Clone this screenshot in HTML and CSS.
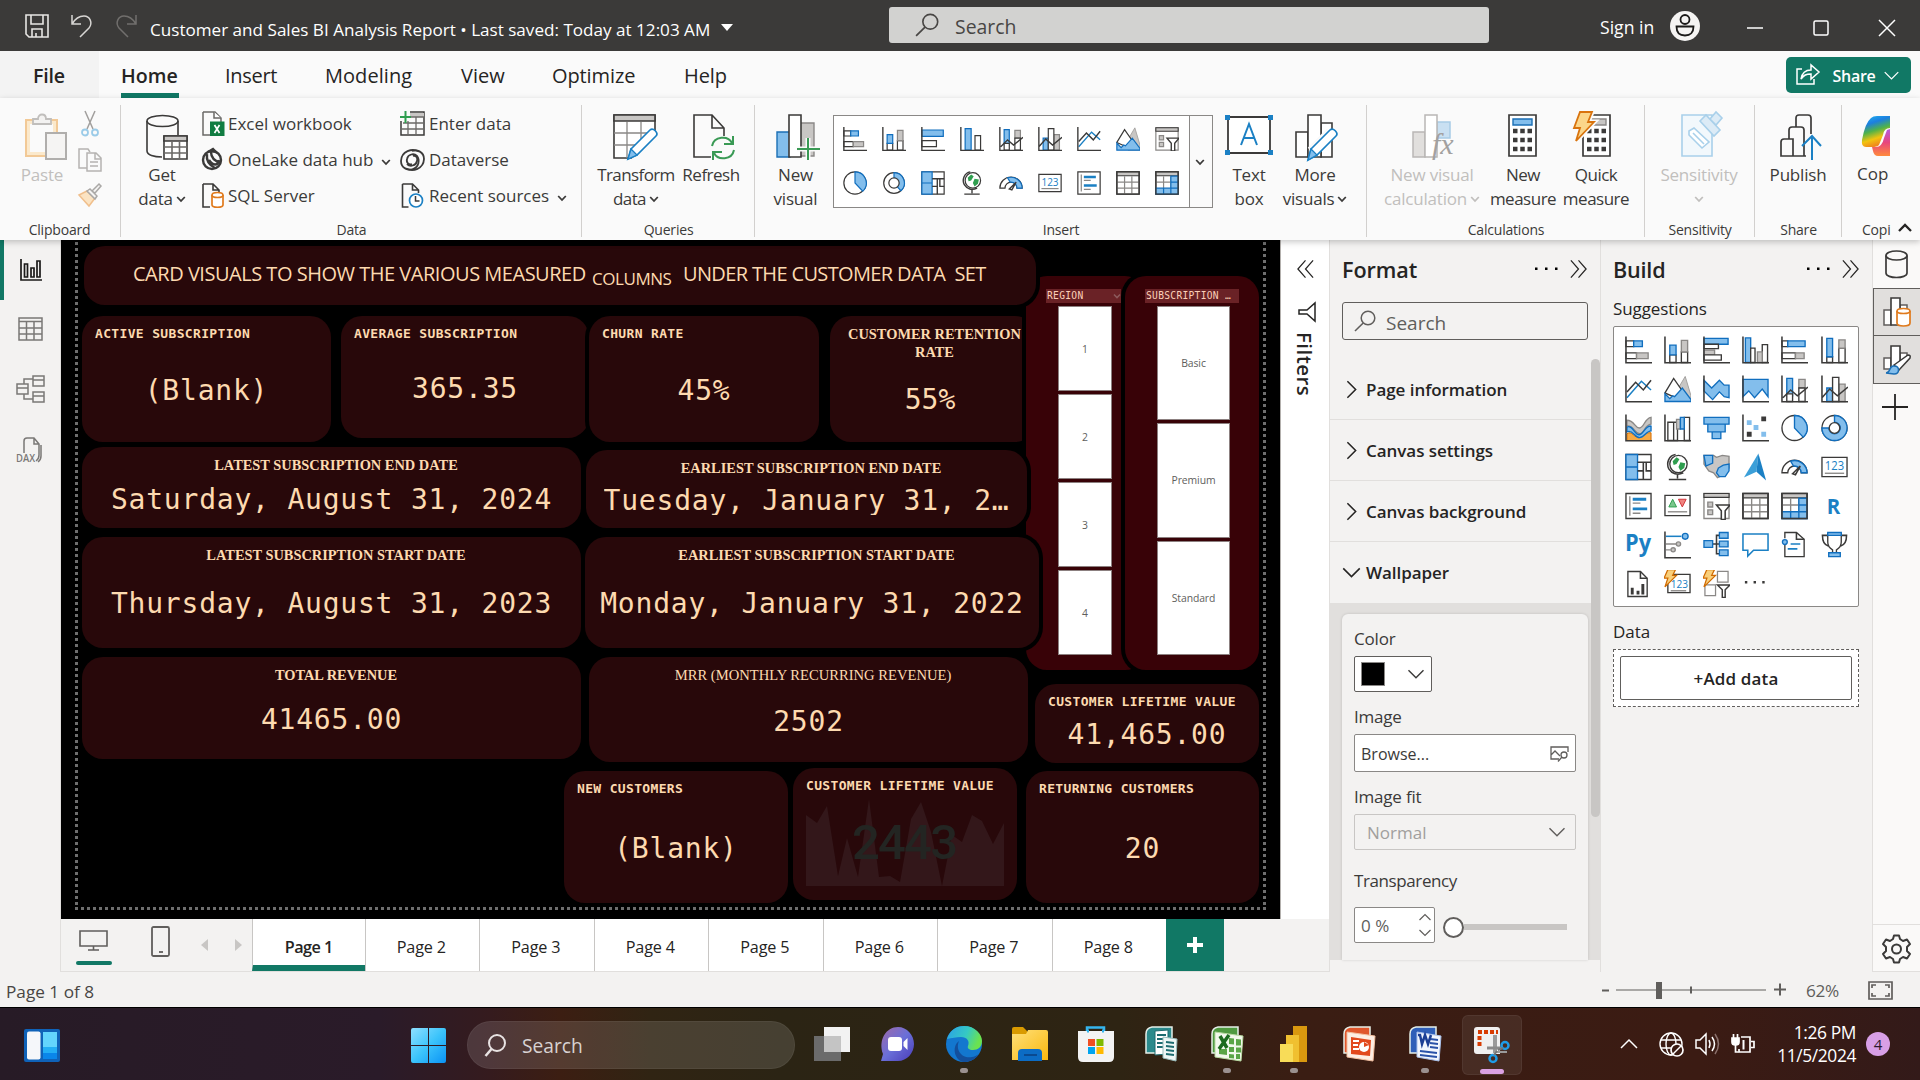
FILE: index.html
```html
<!DOCTYPE html>
<html lang="en">
<head>
<meta charset="utf-8">
<title>Customer and Sales BI Analysis Report</title>
<link rel="stylesheet" href="styles.css">
</head>
<body>
<svg class="paints" aria-hidden="true">
  <defs>
    <linearGradient id="g-cop" x1="0" y1="0" x2="0.3" y2="1"><stop offset="0" stop-color="#1fb8f0"/><stop offset=".3" stop-color="#1c7fe0"/><stop offset=".55" stop-color="#4fb24a"/><stop offset=".8" stop-color="#f2c40f"/><stop offset="1" stop-color="#f08a1c"/></linearGradient>
    <linearGradient id="g-cop2" x1="0" y1="0" x2="0" y2="1"><stop offset="0" stop-color="#b35ae0"/><stop offset=".5" stop-color="#e8467c"/><stop offset="1" stop-color="#ff8a3c"/></linearGradient>
    <linearGradient id="g-win" x1="0" y1="0" x2="1" y2="1"><stop offset="0" stop-color="#8fe0ff"/><stop offset=".5" stop-color="#3cc4fb"/><stop offset="1" stop-color="#0a93f5"/></linearGradient>
    <linearGradient id="g-chat" x1="0" y1="0" x2="1" y2="1"><stop offset="0" stop-color="#a06aa8"/><stop offset=".5" stop-color="#6a6fd8"/><stop offset="1" stop-color="#4a3cb8"/></linearGradient>
    <linearGradient id="g-edge" x1="0" y1="0" x2="1" y2=".3"><stop offset="0" stop-color="#2a9fe8"/><stop offset=".6" stop-color="#35c9c4"/><stop offset="1" stop-color="#6be24f"/></linearGradient>
    <linearGradient id="g-fold" x1="0" y1="0" x2="1" y2="1"><stop offset="0" stop-color="#ffe07a"/><stop offset="1" stop-color="#f9b80e"/></linearGradient>
  </defs>
</svg>
<svg class="sprite" aria-hidden="true">
  <symbol id="chev" viewBox="0 0 10 10"><path d="M1.2 3l3.8 4 3.8-4" fill="none" stroke="currentColor" stroke-width="1.8"/></symbol>
  <symbol id="chev-thin" viewBox="0 0 20 12"><path d="M1 1.5l9 9 9-9" fill="none" stroke="currentColor" stroke-width="1.7"/></symbol>
  <symbol id="dbl" viewBox="0 0 20 20"><path d="M2 1l8 9-8 9M10 1l8 9-8 9" fill="none" stroke="currentColor" stroke-width="1.3"/></symbol>
  <symbol id="lens" viewBox="0 0 22 22"><circle cx="14" cy="8" r="6.8" fill="none" stroke="currentColor" stroke-width="1.5"/><path d="M9.2 13L1 21" stroke="currentColor" stroke-width="1.6"/></symbol>
  <symbol id="v-sbar" viewBox="0 0 28 28"><path d="M1 4.5h8v6H1z" class="kw"/><path d="M9 4.500h9v6H9z" class="b"/><path d="M1 17h11v6H1z" class="kw"/><path d="M12 17h12v6H12z" class="g"/><path d="M1 0v27.200h27" class="k"/></symbol>
  <symbol id="v-scol" viewBox="0 0 28 28"><path d="M6 19h6.500v8H6zM18 16h6.500v11H18z" class="kw"/><path d="M6 9h6.500v10H6z" class="b"/><path d="M18 4h6.500v12H18z" class="g"/><path d="M1 0v27.200h27" class="k"/></symbol>
  <symbol id="v-cbar" viewBox="0 0 28 28"><path d="M1 2h25v6H1z" class="b"/><path d="M1 8h15v4.500H1z" class="kw"/><path d="M1 14h11v5H1z" class="g"/><path d="M1 19h18v5.500H1z" class="kw"/><path d="M1 0v27.200h27" class="k"/></symbol>
  <symbol id="v-bar2" viewBox="0 0 28 28"><path d="M1 3.500h25v7.500H1z" class="b"/><path d="M1 16h17v7H1z" class="kw"/><path d="M1 0v27.200h27" class="k"/></symbol>
  <symbol id="v-ccol" viewBox="0 0 28 28"><path d="M3.500 1.500h5.500V27H3.500z" class="b"/><path d="M9 12h4.500v15H9zM21 8.500h5.500V27H21z" class="kw"/><path d="M16 16h5v11h-5z" class="g"/><path d="M1 0v27.200h27" class="k"/></symbol>
  <symbol id="v-col2" viewBox="0 0 28 28"><path d="M6 2h7v25H6z" class="b"/><path d="M17.500 10h6.500v17h-6.500z" class="kw"/><path d="M1 0v27.200h27" class="k"/></symbol>
  <symbol id="v-pbar" viewBox="0 0 28 28"><path d="M1 4.500h6v6H1zM1 17h14v6H1z" class="kw"/><path d="M7 4.500h18v6H7z" class="b"/><path d="M15 17h9v6h-9z" class="g"/><path d="M1 0v27.200h27" class="k"/></symbol>
  <symbol id="v-pcol" viewBox="0 0 28 28"><path d="M6 21h6v6H6zM18.500 12H25v15h-6.500z" class="kw"/><path d="M6 2h6v19H6z" class="b"/><path d="M18.500 3.500H25V12h-6.500z" class="g"/><path d="M1 0v27.200h27" class="k"/></symbol>
  <symbol id="v-line" viewBox="0 0 28 28"><path d="M2 23L17 6l10 9" class="bl"/><path d="M2 17l9-10 8 8 8-10" class="k"/><path d="M1 0v27.200h27" class="k"/></symbol>
  <symbol id="v-area" viewBox="0 0 28 28"><path d="M12 18L22 1l6 20v6H14z" class="gf"/><path d="M1 18L10 3l9 13-5 8z" class="kw"/><path d="M1 19l5 5 3-3 2 1 8-9 9 12v2H1z" class="b"/></symbol>
  <symbol id="v-sarea" viewBox="0 0 28 28"><path d="M1 5l8 8 8-8 5 5h5v13l-5-1-5-5-7 8-9-9z" class="b"/><path d="M1 0v27.200h27" class="k"/></symbol>
  <symbol id="v-parea" viewBox="0 0 28 28"><path d="M1 4h26v18l-6-8-8 9-6-7-6 6z" class="b"/><path d="M1 0v27.200h27" class="k"/></symbol>
  <symbol id="v-lscol" viewBox="0 0 28 28"><path d="M6 3h6v18H6z" class="b"/><path d="M18.500 4H25v9h-6.500z" class="g"/><path d="M6 19h6v8H6zM18.500 13H25v14h-6.500z" class="kw"/><path d="M2 23l8-8 7 6 11-9M1 0v27.200h27" class="k"/></symbol>
  <symbol id="v-lccol" viewBox="0 0 28 28"><path d="M6 13h6v14H6z" class="b"/><path d="M18.500 9H25v18h-6.500z" class="g"/><path d="M12 2h6.500v25H12z" class="kw"/><path d="M1 23l8-9 8 7 11-9M1 0v27.200h27" class="k"/></symbol>
  <symbol id="v-rib" viewBox="0 0 28 28"><path d="M2 20c5-4 8 5 13 4s6-6 12-5v8H2z" fill="#f7a944" stroke="#d06a00"/><path d="M2 6c8 0 8 8 13 8s5-10 12-11v7c-7 1-7 10-12 10S9 11 2 12z" class="g"/><path d="M2 13c6-3 8 9 13 8s6-10 12-9v5c-5 0-7 7-12 7S8 15 2 18z" class="b"/><path d="M1 0v27.200h27" class="k"/></symbol>
  <symbol id="v-wat" viewBox="0 0 28 28"><path d="M4 8h6v19H4zM21 3h5.500v24H21zM10 8h4v19h-4z" class="kw"/><path d="M13 5h4v10h-4z" class="g"/><path d="M17 3h4v12h-4z" class="b"/><path d="M1 0v27.200h27" class="k"/></symbol>
  <symbol id="v-fun" viewBox="0 0 28 28"><path d="M1 3h26v7H1zM5 10h18v8H5zM9.500 18h9v7h-9z" class="b"/></symbol>
  <symbol id="v-scat" viewBox="0 0 28 28"><path d="M5 6h5v5H5zM12 11h5v5h-5zM20 18h5v5h-5z" fill="#83beec"/><path d="M20 2h5v5h-5zM5 18h5v5H5z" fill="#3b3a39"/><path d="M1 0v27.200h27" class="k"/></symbol>
  <symbol id="v-pie" viewBox="0 0 28 28"><circle cx="14" cy="14" r="13" class="kw"/><path d="M14 1a13 13 0 0 1 9 22.500L14 14z" class="b"/></symbol>
  <symbol id="v-don" viewBox="0 0 28 28"><circle cx="14" cy="14" r="13" class="kw"/><path d="M14 1a13 13 0 1 1-13 13h7a6 6 0 1 0 6-6z" class="b"/><circle cx="14" cy="14" r="5.500" class="kw"/></symbol>
  <symbol id="v-don2" viewBox="0 0 28 28"><circle cx="14" cy="14" r="12" class="kw"/><path d="M14 2a12 12 0 0 1 8 21l-4-4.500A6.500 6.500 0 0 0 14 8z" class="b"/><circle cx="14" cy="14" r="6" class="kw"/></symbol>
  <symbol id="v-tree" viewBox="0 0 28 28"><path d="M1 1h26v26H1z" class="kw"/><path d="M1 1h12v13H1zM1 14h12v13H1z" class="b"/><path d="M13 9h14M19 9v18M13 18h6M22 9v9h5" class="k"/></symbol>
  <symbol id="v-map" viewBox="0 0 28 28"><circle cx="15" cy="11" r="9" class="kw"/><path d="M9 8l4-4 3 2-3 5-3 1zM17 9l5 1-1 5-4 3-2-4z" fill="#2f9e4f"/><path d="M12 1C5 2 2 10 5 16c3 5 9 7 15 4M14 22v4M5 27h18" class="k"/></symbol>
  <symbol id="v-fmap" viewBox="0 0 28 28"><path d="M1 2h10l3 2 6-2 7 1v12l-5 2-1 5-6 3-4-5-5-2-5-7z" class="g"/><path d="M1 2h9v8l-7 3zM16 15l5-3 6-1v7l-4 6h-6l-3-4z" class="b"/></symbol>
  <symbol id="v-az" viewBox="0 0 28 28"><path d="M17 0L2 25l13-6z" fill="#3b9fd8"/><path d="M17 0l8 28-10-9z" fill="#1b80c4"/></symbol>
  <symbol id="v-gau" viewBox="0 0 28 28"><path d="M1 20A13 13 0 0 1 27 20h-6a7 7 0 0 0-14 0z" class="kw"/><path d="M10 8A13 13 0 0 1 27 20h-6a7 7 0 0 0-8-7z" class="b"/><path d="M12 21l8-8-5 9z" class="k"/></symbol>
  <symbol id="v-card" viewBox="0 0 28 28"><path d="M1 4h26v20H1z" class="kw"/><text x="14" y="17" font-size="12.500" textLength="20" lengthAdjust="spacingAndGlyphs" text-anchor="middle" fill="#1b80c4">123</text><path d="M4 20.500h20" class="gl"/></symbol>
  <symbol id="v-mcard" viewBox="0 0 28 28"><path d="M1 1h26v26H1z" class="kw"/><path d="M5 4v20" class="gl"/><path d="M8 7h14M8 17h15" stroke="#1b80c4" stroke-width="3"/><path d="M8 11h8M8 21.500h8" class="gl"/></symbol>
  <symbol id="v-kpi" viewBox="0 0 28 28"><path d="M1 3h26v21H1z" class="kw"/><path d="M5 15l4-8 4 8z" fill="#7cc68d" stroke="#2f9e4f"/><path d="M15 7h8l-4 8z" fill="#f0837f" stroke="#d13438"/><path d="M4 20h20" class="gl"/></symbol>
  <symbol id="v-slic" viewBox="0 0 28 28"><path d="M1 1h26v26H1z" fill="#fff" stroke="#8a8886" stroke-width="1.400"/><path d="M1 1h26v4H1z" class="gk"/><path d="M5 10h5v5H5zM5 18h5v5H5z" class="g"/><path d="M14 13h14l-5 6v9h-4v-9z" fill="#fff" stroke="#3b3a39" stroke-width="1.600"/></symbol>
  <symbol id="v-tab" viewBox="0 0 28 28"><path d="M1 1h26v26H1z" class="kw"/><path d="M1 1h26v4.500H1z" class="gk"/><path d="M1 13h26M1 20h26M10 6v21M18.500 6v21" class="gl"/><path d="M1 1h26v26H1z" class="k"/></symbol>
  <symbol id="v-mat" viewBox="0 0 28 28"><path d="M1 1h26v26H1z" class="kw"/><path d="M1 1h26v4.500H1z" class="gk"/><path d="M1 13h17M10 6v14M18.500 6v14" class="gl"/><path d="M18.500 6H27v7h-8.500zM18.500 13H27v7h-8.500zM18.500 20H27v7h-8.500zM10 20h8.500v7H10zM1 20h9v7H1z" class="b"/><path d="M1 1h26v26H1z" class="k"/></symbol>
  <symbol id="v-r" viewBox="0 0 28 28"><text x="6" y="22" font-size="23" font-weight="700" fill="#1b80c4" textLength="14" lengthAdjust="spacingAndGlyphs">R</text></symbol>
  <symbol id="v-py" viewBox="0 0 28 28"><text x="0" y="20" font-size="24" font-weight="700" fill="#1b80c4" textLength="27" lengthAdjust="spacingAndGlyphs">Py</text></symbol>
  <symbol id="v-inf" viewBox="0 0 28 28"><path d="M2 5h16" class="bl"/><circle cx="22" cy="5" r="3" class="b"/><path d="M2 13h11M2 19h5" class="gl"/><circle cx="15" cy="13" r="2.200" class="g"/><circle cx="9.500" cy="19" r="2.200" class="g"/><path d="M1 0v27.200h27" class="k"/></symbol>
  <symbol id="v-dec" viewBox="0 0 28 28"><path d="M10 13h8M18 4h-4v19h4" class="k"/><path d="M1 9.500h9v7H1zM17 1h9v6h-9zM17 10h9v6h-9zM17 19h9v6h-9z" class="b"/></symbol>
  <symbol id="v-qa" viewBox="0 0 28 28"><path d="M1 2.500h26v17H12l-6 6v-6H1z" fill="#fff" stroke="#1b80c4" stroke-width="1.600"/></symbol>
  <symbol id="v-nar" viewBox="0 0 28 28"><path d="M4 7V1h12l8 7v18H4V14" class="kw"/><path d="M16 1v7h8" class="k"/><circle cx="4" cy="11" r="2.500" class="b"/><path d="M10 13h10M7 18h10" class="bl"/></symbol>
  <symbol id="v-tro" viewBox="0 0 28 28"><path d="M7 4H1.500c0 6 2 10 6 11M21 4h5.500c0 6-2 10-6 11" class="k"/><path d="M7 2h14v9c0 5-3 7-5 8v4h-4v-4c-2-1-5-3-5-8z" class="kw"/><path d="M7 1h14v3H7zM8 22h12v4H8z" class="b"/></symbol>
  <symbol id="v-pag" viewBox="0 0 28 28"><path d="M3 1h13l7 7v19H3z" class="kw"/><path d="M16 1v7h7" class="k"/><path d="M6 18h3v7H6zM12 21h3v4h-3zM17 14h3v11h-3z" fill="#3b3a39"/></symbol>
  <symbol id="v-bcard" viewBox="0 0 28 28"><path d="M4 4h23v19H4z" class="kw"/><text x="7" y="18" font-size="12" textLength="18" lengthAdjust="spacingAndGlyphs" fill="#1b80c4">123</text><path d="M7 21h16" class="gl"/><path d="M4-1h8L9 5h4L1 17l3-9H0z" fill="#f9cf7a" stroke="#d06a00" stroke-width="1.300"/></symbol>
  <symbol id="v-bslic" viewBox="0 0 28 28"><path d="M15 1h11v11H15zM2 15h11v11H2z" fill="#fff" stroke="#8a8886" stroke-width="1.300"/><path d="M4-1h8L9 5h4L1 17l3-9H0z" fill="#f9cf7a" stroke="#d06a00" stroke-width="1.300"/><path d="M15 15h13l-5 5v8h-3v-8z" fill="#fff" stroke="#3b3a39" stroke-width="1.500"/></symbol>
  <symbol id="v-dots" viewBox="0 0 28 28"><path d="M3 11h2.500v2.500H3zM12 11h2.500v2.500H12zM21 11h2.500v2.500H21z" fill="#3b3a39"/></symbol>
  <symbol id="t-back" viewBox="0 0 34 36"><path d="M8 1h20v26H2V8q0-6 6-7z" fill="currentColor" stroke="#e6efe9" stroke-width="1.500"/></symbol>
</svg>

<header class="titlebar">
  <div class="quick">
    <svg width="24" height="24" viewBox="0 0 24 24" fill="none" stroke="#e8e6e4" stroke-width="1.600"><path d="M1 1h22v22H4l-3-3zM6 1v9h12V1M7 23v-8h10v8M11 23v-4"/></svg>
    <svg width="22" height="24" viewBox="0 0 22 24" fill="none" stroke="#d8d6d4" stroke-width="1.500"><path d="M1 1v9h9M1 10C4 5 8 2 13 2c6 0 9 7 5 12l-9 9"/></svg>
    <svg width="22" height="24" viewBox="0 0 22 24" fill="none" stroke="#716f6d" stroke-width="1.500"><path d="M21 1v9h-9M21 10C18 5 14 2 9 2 3 2 0 9 4 14l9 9"/></svg>
  </div>
  <div class="doc">Customer and Sales BI Analysis Report • Last saved: Today at 12:03 AM</div>
  <span class="tri"></span>
  <div class="topsearch"><svg width="24" height="24"><use href="#lens"/></svg><span>Search</span></div>
  <span class="signin">Sign in</span>
  <svg class="avatar" width="30" height="30" viewBox="0 0 30 30"><circle cx="15" cy="15" r="15" fill="#f5f4f3"/><g fill="none" stroke="#1b1a19" stroke-width="1.800"><circle cx="15" cy="8.500" r="4.500"/><path d="M6.500 15.500h17c0 6-3 9-8.500 9s-8.500-3-8.500-9z"/></g></svg>
  <div class="winbtns">
    <svg width="16" height="16"><path d="M0 8h16" stroke="#fff" stroke-width="1.500"/></svg>
    <svg width="16" height="16"><rect x="1" y="1" width="14" height="14" rx="1.500" fill="none" stroke="#fff" stroke-width="1.500"/></svg>
    <svg width="16" height="16"><path d="M0 0l16 16M16 0L0 16" stroke="#fff" stroke-width="1.500"/></svg>
  </div>
</header>

<nav class="tabs">
  <span class="file">File</span><span class="home">Home</span><span class="t-ins">Insert</span><span class="t-mod">Modeling</span><span class="t-view">View</span><span class="t-opt">Optimize</span><span class="t-help">Help</span>
  <button class="share"><svg width="24" height="24" viewBox="0 0 24 24" fill="none" stroke="#fff" stroke-width="1.500"><path d="M6 7H1v15h17v-5M5 17c1-6 4-9 10-9V3l8 7-8 7v-5c-5 0-7 1-10 5z"/></svg><span>Share</span><svg width="15" height="9"><use href="#chev-thin"/></svg></button>
</nav>

<section class="ribbon">
  <div class="group g-clip">
    <div class="cmds">
      <div class="big paste dim"><svg width="42" height="46" viewBox="0 0 42 46"><path d="M1 6h31v36H1z" fill="#fbe9cc" stroke="#f2c996" stroke-width="2"/><path d="M5 10h23v28H5z" fill="#fafafa"/><path d="M8 10V5h5c0-6 8-6 8 0h5v5z" fill="#f3f2f1" stroke="#c0bebc" stroke-width="1.800"/><path d="M21 19h20v26H21z" fill="#f5f4f3" stroke="#b0aeac" stroke-width="2"/></svg><span>Paste</span></div>
      <div class="minis">
        <svg width="18" height="26" viewBox="0 0 18 26" fill="none"><path d="M4 0l8 18M14 0L6 18" stroke="#a19f9d" stroke-width="1.500"/><circle cx="4" cy="21.500" r="3" stroke="#9bcbe8" stroke-width="1.800"/><circle cx="14" cy="21.500" r="3" stroke="#9bcbe8" stroke-width="1.800"/></svg>
        <svg width="24" height="24" viewBox="0 0 24 24" fill="#fafafa" stroke="#b5b3b1" stroke-width="1.500"><path d="M9 20H1V1h9l2 3"/><path d="M9 5h9l5 5v13H9zM17 5v6h6M12 14h8M12 18h8"/></svg>
        <svg width="24" height="24" viewBox="0 0 24 24"><path d="M1 12l8-4 8 7-6 8z" fill="#fbe3c2" stroke="#f0bf8c" stroke-width="1.500"/><path d="M9 8l3-2 7 7-2 3zM14 8l7-7 2 2-6 7z" fill="#f5f4f3" stroke="#aaa8a6" stroke-width="1.500"/></svg>
      </div>
    </div>
    <div class="glabel">Clipboard</div>
  </div>
  <div class="group g-data">
    <div class="cmds">
      <div class="big getdata"><svg width="42" height="46" viewBox="0 0 42 46" fill="none" stroke="#3b3a39" stroke-width="1.600"><path d="M1 7v30c0 4 7 6 15 6M32 7v14"/><ellipse cx="16.500" cy="7" rx="15.500" ry="5.500"/><path d="M18 22h23v23H18z" fill="#fff"/><path d="M18 22h23v5H18z" fill="#c8c6c4"/><path d="M18 33h23M18 39h23M26 27v18M33.500 27v18" stroke="#6b6967"/></svg><span>Get</span><span>data<svg width="10" height="10"><use href="#chev"/></svg></span></div>
      <div class="list l1">
        <div><svg width="23" height="25" viewBox="0 0 23 25"><path d="M1 1h12l6 6v5M1 1v23h8" fill="none" stroke="#6b6967" stroke-width="1.500"/><path d="M12 1v6h7" fill="#fff" stroke="#6b6967" stroke-width="1.500"/><path d="M8 10.500h14.500V25H8z" fill="#107c41"/><path d="M12.500 14l5 8M17.500 14l-5 8" stroke="#fff" stroke-width="1.700"/></svg>Excel workbook</div>
        <div><svg width="23" height="23" viewBox="0 0 23 23" fill="none" stroke="#3b3a39" stroke-width="2.400"><circle cx="10" cy="12" r="9"/><path d="M5 6c-1 7 2 11 8 14M9 4c0 6 3 9 10 11M7 12c4 6 9 6 10 0"/><path d="M6 4l5-3 4 4" fill="#3b3a39"/></svg>OneLake data hub<svg class="cv" width="10" height="10"><use href="#chev"/></svg></div>
        <div><svg width="23" height="25" viewBox="0 0 23 25"><path d="M1 1h10l6 6v3M1 1v23h7M11 1v6h6" fill="none" stroke="#3b3a39" stroke-width="1.600"/><path d="M10 12v10c0 3 11 3 11 0V12" fill="#fff" stroke="#e07a1c" stroke-width="1.700"/><ellipse cx="15.500" cy="12" rx="5.500" ry="2.500" fill="#fff" stroke="#e07a1c" stroke-width="1.700"/></svg>SQL Server</div>
      </div>
      <div class="list l2">
        <div><svg width="25" height="25" viewBox="0 0 25 25"><path d="M1 10v14h23V1H10" fill="none" stroke="#3b3a39" stroke-width="1.500"/><path d="M10 2h14v4H10z" fill="#c8c6c4"/><path d="M10 6h14M3 12h21M1 18h23M8 10v14M16 6v18" stroke="#6b6967" stroke-width="1.300" fill="none"/><path d="M5.500 0v12M0 6h11" stroke="#2f9e4f" stroke-width="2"/></svg>Enter data</div>
        <div><svg width="25" height="22" viewBox="0 0 25 22" fill="none" stroke="#3b3a39" stroke-width="1.800"><path d="M19 2.500C12-1 1.500 2 1 12c0 7 7 10 12 8 6-2 7-9 4-13-3-3-9-2-10 3-1 4 2 6 5 5"/><path d="M6 19.500c7 3.500 17.500.500 18-9.500 0-7-7-10-12-8"/><path d="M13 7c3-1 5 2 4 5-1 5-7 6-10 3"/></svg>Dataverse</div>
        <div><svg class="rs" width="22" height="25" viewBox="0 0 22 25"><path d="M1 1h10l6 6v3M1 1v23h6M11 1v6h6" fill="none" stroke="#3b3a39" stroke-width="1.600"/><circle cx="14.500" cy="17.500" r="6.500" fill="#fff" stroke="#1b80c4" stroke-width="1.700"/><path d="M14 13v5h4" fill="none" stroke="#3b3a39" stroke-width="1.500"/></svg>Recent sources<svg class="cv" width="10" height="10"><use href="#chev"/></svg></div>
      </div>
    </div>
    <div class="glabel">Data</div>
  </div>
  <div class="group g-query">
    <div class="cmds">
      <div class="big b-tr"><svg width="46" height="46" viewBox="0 0 46 46"><path d="M1 1h41v43H1z" fill="#fff" stroke="#3b3a39" stroke-width="1.600"/><path d="M1 1h41v6H1z" fill="#c8c6c4" stroke="#3b3a39" stroke-width="1.600"/><path d="M1 19h41M1 31h41M14 8v36M28 8v36" stroke="#8a8886" stroke-width="1.300"/><path d="M40 20l8 6v22H16z" fill="#fafafa"/><path d="M18 35L37 16c3-3 9 3 6 6L24 41l-9 4z" fill="#fff" stroke="#1b80c4" stroke-width="1.700"/><path d="M18 35l6 6-9 4z" fill="#83beec" stroke="#1b80c4" stroke-width="1.300"/></svg><span>Transform</span><span>data<svg width="10" height="10"><use href="#chev"/></svg></span></div>
      <div class="big b-rf"><svg width="42" height="46" viewBox="0 0 42 46" fill="none"><path d="M18 43H1V1h18l12 13v8M19 1v13h12" stroke="#3b3a39" stroke-width="1.600"/><path d="M19 32c2-10 16-11 20-3M40 22v8h-9M41 36c-2 10-16 11-20 3M20 46v-8h9" stroke="#3a9a55" stroke-width="2"/></svg><span>Refresh</span></div>
    </div>
    <div class="glabel">Queries</div>
  </div>
  <div class="group g-insert">
    <div class="cmds">
      <div class="big b-nv"><svg width="44" height="46" viewBox="0 0 44 46"><path d="M24 9h14v33H24z" fill="#c8c6c4" stroke="#8a8886" stroke-width="1.400"/><path d="M1 18h13v25H1z" fill="#83beec" stroke="#1b6fb5" stroke-width="1.400"/><path d="M13 1h12v42H13z" fill="#fff" stroke="#3b3a39" stroke-width="1.600"/><path d="M32 24v22M21 35h23" stroke="#fafafa" stroke-width="5"/><path d="M32 24v22M21 35h23" stroke="#3a9a55" stroke-width="2"/></svg><span>New</span><span>visual</span></div>
      <div class="gallery">
        <div class="cells">
          <svg><use href="#v-sbar"/></svg><svg><use href="#v-scol"/></svg><svg><use href="#v-bar2"/></svg><svg><use href="#v-col2"/></svg><svg><use href="#v-lscol"/></svg><svg><use href="#v-lccol"/></svg><svg><use href="#v-line"/></svg><svg><use href="#v-area"/></svg><svg><use href="#v-slic"/></svg>
          <svg><use href="#v-pie"/></svg><svg><use href="#v-don2"/></svg><svg><use href="#v-tree"/></svg><svg><use href="#v-map"/></svg><svg><use href="#v-gau"/></svg><svg><use href="#v-card"/></svg><svg><use href="#v-mcard"/></svg><svg><use href="#v-tab"/></svg><svg><use href="#v-mat"/></svg>
        </div>
        <div class="more"><svg width="10" height="10"><use href="#chev"/></svg></div>
      </div>
      <div class="big b-tb"><svg width="48" height="46" viewBox="0 0 48 46"><path d="M3 3h42v36H3z" fill="#fff" stroke="#3b3a39" stroke-width="1.800"/><path d="M0 1h5v5H0zM43 1h5v5h-5zM0 36h5v5H0zM43 36h5v5h-5z" fill="#1b80c4"/><path d="M16 31l8-21 8 21M19 24h10" fill="none" stroke="#1b80c4" stroke-width="2"/></svg><span>Text</span><span>box</span></div>
      <div class="big b-mv"><svg width="46" height="46" viewBox="0 0 46 46"><path d="M1 18h12v25H1zM26 9h11v34H26z" fill="#fff" stroke="#3b3a39" stroke-width="1.600"/><path d="M13 1h13v42H13z" fill="#fff" stroke="#3b3a39" stroke-width="1.600"/><path d="M36 19L17 38" stroke="#fafafa" stroke-width="12"/><path d="M16 35L35 16c3-3 9 3 6 6L22 41l-9 5z" fill="#fff" stroke="#1b80c4" stroke-width="1.700"/><path d="M16 35l6 6-9 5z" fill="#83beec" stroke="#1b80c4" stroke-width="1.300"/></svg><span>More</span><span>visuals<svg width="10" height="10"><use href="#chev"/></svg></span></div>
    </div>
    <div class="glabel">Insert</div>
  </div>
  <div class="group g-calc">
    <div class="cmds">
      <div class="big b-nvc dim"><svg width="44" height="46" viewBox="0 0 44 46"><path d="M1 18h12v25H1z" fill="#e1dfdd" stroke="#b9b7b5" stroke-width="1.500"/><path d="M25 8h13v16H25z" fill="#c9e0f2" stroke="#a8cbe6" stroke-width="1.500"/><path d="M13 1h12v42H13z" fill="#fff" stroke="#b9b7b5" stroke-width="1.500"/><text x="20" y="40" font-family="Liberation Serif" font-style="italic" font-size="30" fill="#a3a1a0">fx</text></svg><span>New visual</span><span>calculation<svg width="10" height="10"><use href="#chev"/></svg></span></div>
      <div class="big b-nm"><svg width="30" height="46" viewBox="0 0 30 46"><path d="M1 1h27v41H1z" fill="#fff" stroke="#3b3a39" stroke-width="1.700"/><path d="M5 5h19v6H5z" fill="#83beec" stroke="#1b6fb5" stroke-width="1.400"/><path d="M5 17h19M5 26h19M5 35h19" stroke="#3b3a39" stroke-width="4.500" stroke-dasharray="4.500 2.750"/></svg><span>New</span><span>measure</span></div>
      <div class="big b-qm"><svg class="up" width="40" height="49" viewBox="0 0 40 49"><path d="M10 4h27v41H10z" fill="#fff" stroke="#3b3a39" stroke-width="1.700"/><path d="M18 8h15v6H18z" fill="#c8c6c4" stroke="#8a8886" stroke-width="1.400"/><path d="M14 20h19M14 29h19M14 38h19" stroke="#3b3a39" stroke-width="4.500" stroke-dasharray="4.500 2.750"/><path d="M7 1h12l-4 10h6L3 30l4-13H1z" fill="#fbd68a" stroke="#fafafa" stroke-width="5"/><path d="M7 1h12l-4 10h6L3 30l4-13H1z" fill="#fbd68a" stroke="#d9730d" stroke-width="1.800"/></svg><span>Quick</span><span>measure</span></div>
    </div>
    <div class="glabel">Calculations</div>
  </div>
  <div class="group g-sens">
    <div class="cmds"><div class="big b-se dim"><svg class="up" width="42" height="49" viewBox="0 0 42 49" fill="#f2f8fc" stroke="#a9d0ea" stroke-width="1.600"><path d="M1 4h30v41H1z"/><path d="M8 20l5-3 15 14-7 6L8 24z" fill="#fff"/><path d="M12 22l11 11"/><path d="M19 10l6-6 14 15-6 6zM29 8l6-7 6 6-6 7z" fill="#dcebf6"/></svg><span>Sensitivity</span><span><svg width="10" height="10"><use href="#chev"/></svg></span></div></div>
    <div class="glabel">Sensitivity</div>
  </div>
  <div class="group g-share">
    <div class="cmds"><div class="big b-pu"><svg width="42" height="46" viewBox="0 0 42 46" fill="none" stroke="#3b3a39" stroke-width="1.700"><path d="M26 42H1V28q0-3 3-3h9v17M9 25V16q0-3 3-3h9q3 0 3 3v26M16 13V4q0-3 3-3h9q3 0 3 3v16"/><path d="M32 46V22M22 32l10-10 9 10" stroke="#1b80c4" stroke-width="2"/></svg><span>Publish</span></div></div>
    <div class="glabel">Share</div>
  </div>
  <div class="group g-cop">
    <div class="copwrap">
      <svg width="28" height="42" viewBox="0 0 28 42"><path d="M9 3q2-2 6-2h13v12q-6 0-7 7l-4 10q-2 2-7 2H4q-5 0-4-7Q3 8 9 3z" fill="url(#g-cop)"/><path d="M28 14v27H16q-4 0-5-5l-1-4h4q6 0 8-9l3-8z" fill="url(#g-cop2)"/></svg>
      <span>Cop</span><em>Copi</em>
    </div>
    <svg class="collapse" width="14" height="10" viewBox="0 0 14 10"><path d="M1 8l6-6 6 6" fill="none" stroke="#252423" stroke-width="2.300"/></svg>
  </div>
</section>

<main class="main">
  <aside class="rail">
    <div class="on"><svg width="22" height="22" viewBox="0 0 22 22" fill="none" stroke="#1b1a19" stroke-width="1.700"><path d="M1 0v21h21M4.500 5h3v13h-3zM11 9h3v9h-3zM17 2h3v16h-3z"/></svg></div>
    <div><svg width="25" height="24" viewBox="0 0 25 24" fill="none" stroke="#7a7876" stroke-width="1.500"><path d="M1 1h23v22H1zM1 4.500h23M1 11h23M1 17h23M8.500 5v18M16 5v18"/></svg></div>
    <div><svg width="29" height="28" viewBox="0 0 29 28" fill="none" stroke="#7a7876" stroke-width="1.500"><path d="M1 9h11v10H1zM1 13h11M17 1h11v10H17zM17 5h11M17 17h11v10H17zM17 21h11M8 9V4h9M8 19v5h9"/></svg></div>
    <div><svg width="28" height="26" viewBox="0 0 28 26" fill="none" stroke="#7a7876" stroke-width="1.500"><path d="M8 16V4q0-3 3-3h7l5 6v11q0 4-3 6M18 1v6h5M25 8v11q0 4-3 6"/><text x="0" y="25" font-size="11.500" font-weight="600" fill="#7a7876" stroke="none" textLength="19" lengthAdjust="spacingAndGlyphs">DAX</text></svg></div>
  </aside>

  <div class="center">
    <div class="stage">
      <div class="canvas">
        <i class="dots dl"></i><i class="dots dr"></i><i class="dots db"></i>
        <div class="vis c-ret serif"><h4>CUSTOMER RETENTION<br>RATE</h4><b>55%</b></div>
        <div class="vis slicer s-region"><h5>REGION<svg width="8" height="8"><use href="#chev"/></svg></h5><ul><li>1</li><li>2</li><li>3</li><li>4</li></ul></div>
        <div class="vis slicer s-sub"><h5>SUBSCRIPTION …</h5><ul><li>Basic</li><li>Premium</li><li>Standard</li></ul></div>
        <div class="vis c-head"><span>CARD VISUALS TO SHOW THE VARIOUS MEASURED</span><small>COLUMNS</small><span class="h2">UNDER THE CUSTOMER DATA&nbsp; SET</span></div>
        <div class="vis c-act"><h4>ACTIVE SUBSCRIPTION</h4><b>(Blank)</b></div>
        <div class="vis c-avg"><h4>AVERAGE SUBSCRIPTION</h4><b>365.35</b></div>
        <div class="vis c-churn"><h4>CHURN RATE</h4><b>45%</b></div>
        <div class="vis c-le serif"><h4>LATEST SUBSCRIPTION END DATE</h4><b>Saturday, August 31, 2024</b></div>
        <div class="vis c-ee serif"><h4>EARLIEST SUBSCRIPTION END DATE</h4><b>Tuesday, January 31, 2…</b></div>
        <div class="vis c-ls serif"><h4>LATEST SUBSCRIPTION START DATE</h4><b>Thursday, August 31, 2023</b></div>
        <div class="vis c-es serif"><h4>EARLIEST SUBSCRIPTION START DATE</h4><b>Monday, January 31, 2022</b></div>
        <div class="vis c-tot serif"><h4>TOTAL REVENUE</h4><b>41465.00</b></div>
        <div class="vis c-mrr serif light"><h4>MRR (MONTHLY RECURRING REVENUE)</h4><b>2502</b></div>
        <div class="vis c-clv"><h4>CUSTOMER LIFETIME VALUE</h4><b>41,465.00</b></div>
        <div class="vis c-new"><h4>NEW CUSTOMERS</h4><b>(Blank)</b></div>
        <div class="vis c-kpi"><h4>CUSTOMER LIFETIME VALUE</h4>
          <svg width="198" height="90" viewBox="0 0 198 90"><path d="M0 18l11 8 10-17 11 70 9-38 11 39L63 2l10 78 11-1 10 6 11-63 10-17 10 30 11 54 10-51 10 7 10-27 10 6 11 23 11-21v63H0z" fill="#33171a"/><text x="99" y="62" text-anchor="middle" font-family="Roboto" font-weight="500" font-size="49" textLength="106" lengthAdjust="spacing" fill="#232522">2443</text></svg></div>
        <div class="vis c-rc"><h4>RETURNING CUSTOMERS</h4><b>20</b></div>
      </div>
      <div class="filters">
        <svg class="flip" width="19" height="20"><use href="#dbl"/></svg>
        <svg class="fun" width="20" height="20" viewBox="0 0 20 20"><path d="M18 1v18l-8-7H2V8h8z" fill="none" stroke="#252423" stroke-width="1.500"/></svg>
        <span>Filters</span>
      </div>
    </div>
    <div class="pagebar">
      <div class="dev"><svg width="29" height="21" viewBox="0 0 29 21" fill="none" stroke="#605e5c" stroke-width="1.600"><path d="M1 1h27v15H1zM14.500 16v4M9 20h11"/></svg><i></i></div>
      <svg class="mob" width="20" height="31" viewBox="0 0 20 31" fill="none" stroke="#605e5c" stroke-width="1.800"><rect x="1" y="1" width="17" height="29" rx="1.500"/><path d="M8 26h4"/></svg>
      <span class="al"></span><span class="ar"></span>
      <div class="pages"><span class="cur">Page 1</span><span>Page 2</span><span>Page 3</span><span>Page 4</span><span>Page 5</span><span>Page 6</span><span>Page 7</span><span>Page 8</span></div>
      <div class="add"><svg width="18" height="18"><path d="M9 1v16M1 9h16" stroke="#fff" stroke-width="4"/></svg></div>
    </div>
  </div>

  <section class="pane format">
    <header><h2>Format</h2><svg class="el" width="23" height="4"><path d="M0 .5h2.500v2.500H0zM10 .5h2.500v2.500H10zM20 .5h2.500v2.500H20z"/></svg><svg width="19" height="20"><use href="#dbl"/></svg></header>
    <div class="psearch"><svg width="22" height="22"><use href="#lens"/></svg><span>Search</span></div>
    <div class="scroll">
      <div class="rows">
        <div class="row"><svg class="rt" width="19" height="11"><use href="#chev-thin"/></svg>Page information</div>
        <div class="row"><svg class="rt" width="19" height="11"><use href="#chev-thin"/></svg>Canvas settings</div>
        <div class="row"><svg class="rt" width="19" height="11"><use href="#chev-thin"/></svg>Canvas background</div>
        <div class="row last"><svg width="19" height="11"><use href="#chev-thin"/></svg>Wallpaper</div>
        <div class="well"><div class="wcard">
          <label>Color</label>
          <div class="swatch"><i></i><svg width="18" height="10"><use href="#chev-thin"/></svg></div>
          <label class="m1">Image</label>
          <div class="inp">Browse...<svg width="19" height="16" viewBox="0 0 19 16" fill="none" stroke="#605e5c" stroke-width="1.300"><path d="M9 13H1V1h17v5M1 9l4-4 5 5"/><circle cx="14" cy="9" r="3"/><path d="M12 11l-4 4.500"/></svg></div>
          <label class="m2">Image fit</label>
          <div class="inp off">Normal<svg width="18" height="10"><use href="#chev-thin"/></svg></div>
          <label class="m3">Transparency</label>
          <div class="slide"><div class="num">0 %<svg width="12" height="24" viewBox="0 0 12 24" fill="none" stroke="#605e5c" stroke-width="1.200"><path d="M.5 7L6 1.500 11.500 7M.5 17L6 22.500 11.500 17"/></svg></div><i class="knob"></i><i class="track"></i></div>
        </div></div>
      </div>
      <i class="bar"></i>
    </div>
  </section>

  <section class="pane build">
    <header><h2>Build</h2><svg class="el" width="23" height="4"><path d="M0 .5h2.500v2.500H0zM10 .5h2.500v2.500H10zM20 .5h2.500v2.500H20z"/></svg><svg width="19" height="20"><use href="#dbl"/></svg></header>
    <p class="sug">Suggestions</p>
    <div class="vgrid">
      <svg><use href="#v-sbar"/></svg><svg><use href="#v-scol"/></svg><svg><use href="#v-cbar"/></svg><svg><use href="#v-ccol"/></svg><svg><use href="#v-pbar"/></svg><svg><use href="#v-pcol"/></svg>
      <svg><use href="#v-line"/></svg><svg><use href="#v-area"/></svg><svg><use href="#v-sarea"/></svg><svg><use href="#v-parea"/></svg><svg><use href="#v-lscol"/></svg><svg><use href="#v-lccol"/></svg>
      <svg><use href="#v-rib"/></svg><svg><use href="#v-wat"/></svg><svg><use href="#v-fun"/></svg><svg><use href="#v-scat"/></svg><svg><use href="#v-pie"/></svg><svg><use href="#v-don"/></svg>
      <svg><use href="#v-tree"/></svg><svg><use href="#v-map"/></svg><svg><use href="#v-fmap"/></svg><svg><use href="#v-az"/></svg><svg><use href="#v-gau"/></svg><svg><use href="#v-card"/></svg>
      <svg><use href="#v-mcard"/></svg><svg><use href="#v-kpi"/></svg><svg><use href="#v-slic"/></svg><svg><use href="#v-tab"/></svg><svg><use href="#v-mat"/></svg><svg><use href="#v-r"/></svg>
      <svg><use href="#v-py"/></svg><svg><use href="#v-inf"/></svg><svg><use href="#v-dec"/></svg><svg><use href="#v-qa"/></svg><svg><use href="#v-nar"/></svg><svg><use href="#v-tro"/></svg>
      <svg><use href="#v-pag"/></svg><svg><use href="#v-bcard"/></svg><svg><use href="#v-bslic"/></svg><svg><use href="#v-dots"/></svg>
    </div>
    <p class="dlab">Data</p>
    <div class="drop"><div>+Add data</div></div>
  </section>

  <aside class="rrail">
    <div class="r0"><svg width="23" height="29" viewBox="0 0 23 29" fill="none" stroke="#3b3a39" stroke-width="1.700"><ellipse cx="11.500" cy="5.500" rx="10.500" ry="4.500"/><path d="M1 5.500V23c0 6 21 6 21 0V5.500"/></svg></div>
    <div class="r1"><svg width="28" height="30" viewBox="0 0 28 30"><path d="M1 13h7v15H1zM17 8h7v20h-7z" fill="#fff" stroke="#605e5c" stroke-width="1.500"/><path d="M8 1h9v27H8z" fill="#fff" stroke="#3b3a39" stroke-width="1.600"/><path d="M14 14v12c0 4 13 4 13 0V14" fill="#fff" stroke="#e07a1c" stroke-width="1.700"/><ellipse cx="20.500" cy="14" rx="6.500" ry="2.500" fill="#fff" stroke="#e07a1c" stroke-width="1.700"/></svg></div>
    <div class="r1 r2"><svg width="28" height="30" viewBox="0 0 28 30"><path d="M1 13h7v11H1zM17 8h7v8h-7z" fill="#fff" stroke="#605e5c" stroke-width="1.500"/><path d="M8 1h9v22H8z" fill="#fff" stroke="#3b3a39" stroke-width="1.600"/><path d="M11 20L25 10q3 0 2 3L16 25z" fill="#fff" stroke="#3b3a39" stroke-width="1.500"/><path d="M3 28c5 0 3-8 8-7 6 0 6 8 0 8z" fill="#83beec" stroke="#1b6fb5" stroke-width="1.500"/></svg></div>
    <div class="r3"><svg width="26" height="26"><path d="M13 0v26M0 13h26" stroke="#252423" stroke-width="1.800"/></svg></div>
    <div class="r4"><svg width="31" height="30" viewBox="0 0 31 30" fill="none" stroke="#3b3a39" stroke-width="2"><path d="M12 5l1-3.500h5L19 5l3 2 4-1.500 3 4.500-3 3v4l3 3-3 4.500-4-1.500-3 2-1 3.500h-5L12 25l-3-2-4 1.500L2 20l3-3v-4L2 10l3-4.500L9 7z" stroke-linejoin="round"/><circle cx="15.500" cy="15" r="4.500"/></svg></div>
  </aside>
</main>

<footer class="status">
  <span>Page 1 of 8</span>
  <div class="zoom"><svg width="184" height="20" viewBox="0 0 184 20"><path d="M0 10.500h7M172 9.500h12M178 3.500v12" stroke="#605e5c" stroke-width="2"/><path d="M14 10h150" stroke="#605e5c" stroke-width="1.200"/><path d="M54 2h6v17h-6zM88 6.500h2v7h-2z" fill="#605e5c"/></svg><span>62%</span>
  <svg width="25" height="19" viewBox="0 0 25 19" fill="none" stroke="#605e5c" stroke-width="1.700"><path d="M1 1h23v17H1zM4 7V4h4M21 7V4h-4M4 12v3h4M21 12v3h-4"/></svg></div>
</footer>

<div class="taskbar">
  <svg class="wid" width="36" height="33" viewBox="0 0 36 33"><rect width="36" height="33" rx="2" fill="#0f62b8"/><rect x="3" y="2.500" width="13.500" height="28" rx="2" fill="#f5f7fa"/><path d="M19 3h14v15H19z" fill="#63d4fd"/><path d="M19 18h14v6H19z" fill="#23aef5"/><path d="M19 24h14v6H19z" fill="#0a86ea"/></svg>
  <svg class="start" width="35" height="35" viewBox="0 0 35 35" fill="url(#g-win)"><path d="M0 2q0-2 2-2h15v17H0zM18 0h15q2 0 2 2v15H18zM0 18h17v17H2q-2 0-2-2zM18 18h17v15q0 2-2 2H18z"/></svg>
  <div class="tsearch"><svg width="23" height="23" viewBox="0 0 23 23"><circle cx="13" cy="9" r="8" fill="none" stroke="#e8e3e3" stroke-width="2"/><path d="M7.500 15L1.500 22" stroke="#e8e3e3" stroke-width="2.500"/></svg>Search</div>
  <div class="apps">
    <div><svg width="36" height="36" viewBox="0 0 36 36"><path d="M10 1h26v25H10z" fill="#f2f2f2"/><path d="M0 10h27v25H0z" fill="#6b6b6b"/><path d="M10 10h17v16H10z" fill="#c4c4c4"/></svg></div>
    <div><svg width="36" height="36" viewBox="0 0 36 36"><path d="M18 1c9 0 16 8 16 17s-7 17-16 17H1l2-7C-2 14 6 1 18 1z" fill="url(#g-chat)"/><rect x="8" y="11" width="14" height="14" rx="3" fill="#fff"/><path d="M23.500 16l4-4v12l-4-4z" fill="#fff"/></svg></div>
    <div class="run"><svg width="36" height="36" viewBox="0 0 36 36"><circle cx="18" cy="18" r="18" fill="#1377cf"/><path d="M1 13C4 4 10 0 18 0c11 0 18 8 18 15 0 6-4 9-9 9-4 0-6-2-5-4 2-5-1-9-7-9-5 0-9 1-14 2z" fill="url(#g-edge)"/><path d="M13 15c-4 9 3 18 13 16 2 0 5-2 7-3-4 6-10 8-15 8-9-1-13-15-5-21z" fill="#134f9c"/></svg></div>
    <div><svg width="36" height="36" viewBox="0 0 36 36"><path d="M0 3q0-2 2-2h9l4 4v8H0z" fill="#d99a00"/><path d="M0 8h14l2-4h18q2 0 2 2v28H0z" fill="url(#g-fold)"/><path d="M6 35V27q0-4 4-4h16q4 0 4 4v8z" fill="#0c6cc4"/><path d="M12 29h13" stroke="#0a4a90" stroke-width="2"/></svg></div>
    <div><svg width="36" height="36" viewBox="0 0 36 36"><path d="M9 8V1.500h17V8" fill="none" stroke="#35b5ee" stroke-width="2.500"/><path d="M0 5h36v26q0 5-5 5H5q-5 0-5-5z" fill="#f3f3f3"/><path d="M10 13h7v7h-7z" fill="#f04e23"/><path d="M18.500 13h7v7h-7z" fill="#7fba00"/><path d="M10 21h7v7h-7z" fill="#00a4ef"/><path d="M18.500 21h7v7h-7z" fill="#ffb900"/><path d="M9 5h17" stroke="#35b5ee" stroke-width="3" stroke-dasharray="2 13"/></svg></div>
    <div class="c-pub"><svg width="34" height="36" viewBox="0 0 34 36"><use href="#t-back"/><path d="M11 5l13-1v24l-13 1z" fill="#fff" stroke="#1d6b70"/><path d="M13 9h9M13 13h9M13 17h9M13 21h9" stroke="#1d6b70" stroke-width="2"/><path d="M19 11l14 2-1 22-13-3z" fill="#eef6f5" stroke="#9bb"/><path d="M22 16l8 1M22 20l8 1M22 24l8 1M22 28l8 1" stroke="#1d6b70" stroke-width="2"/></svg></div>
    <div class="run c-xls"><svg width="34" height="36" viewBox="0 0 34 36"><use href="#t-back"/><path d="M5 6l28 4-2 25L5 31z" fill="#f2f8ec" stroke="#b7d9a0"/><path d="M19 12l5 .5v6l-5-.5zM26 13l5 .5v6h-5zM19 21h5v5h-5zM26 21.500h5v5h-5zM9 23h8v6l-8-1zM19 28l5 .5v4l-5-.5zM26 28h4v5h-4z" fill="#5aa546"/><path d="M10 10l7 12M19 9L9 23" stroke="#1d6b1f" stroke-width="3.500"/></svg></div>
    <div class="run"><svg width="36" height="36" viewBox="0 0 36 36"><path d="M17 0h14v36H17z" fill="#d9980f"/><path d="M10 9h13v27H10z" fill="#f0c030"/><path d="M4 18h13v18H4z" fill="#f8dc58"/></svg></div>
    <div class="c-ppt"><svg width="34" height="36" viewBox="0 0 34 36"><use href="#t-back"/><path d="M5 6l28 4-2 25L5 31z" fill="#fdeee4" stroke="#f4c0a0"/><path d="M9 11l20 3-1 16-19-2z" fill="#e2491d"/><path d="M11 15h6M11 19h5M11 23h6" stroke="#fff" stroke-width="2"/><circle cx="22" cy="21" r="5" fill="#fff"/><path d="M22 21v-5l5 3z" fill="#e2491d"/></svg></div>
    <div class="run c-doc"><svg width="34" height="36" viewBox="0 0 34 36"><use href="#t-back"/><path d="M9 6l24 4-2 25L9 31z" fill="#f2f6fd" stroke="#a9c0ea"/><path d="M22 13l8 1M22 17l8 1M22 21l8 1M12 25l17 2M12 29l17 2" stroke="#2a52a8" stroke-width="2"/><path d="M10 9h2l2 9 3-9 3 9 3-9" fill="none" stroke="#1c3f94" stroke-width="2.500"/></svg></div>
    <div class="act"><svg width="36" height="36" viewBox="0 0 36 36"><path d="M0 3q0-3 3-3h20q3 0 3 3v24H3q-3 0-3-3z" fill="#f0f0f0"/><path d="M4 5h20M5.500 9v12" stroke="#d83b01" stroke-width="4" stroke-dasharray="4 2"/><path d="M19 8h4v16h10v2H19z" fill="#9a9a9a"/><path d="M13 21h14" stroke="#8a8a8a" stroke-width="3"/><circle cx="31" cy="18.500" r="3.500" fill="none" stroke="#1e9ce8" stroke-width="2.500"/><circle cx="19" cy="31.500" r="3.500" fill="none" stroke="#1e9ce8" stroke-width="2.500"/><path d="M20 28l3-4M24 23l5-2" stroke="#777" stroke-width="2"/></svg></div>
  </div>
  <div class="tray">
    <svg width="18" height="10" viewBox="0 0 18 10"><path d="M1 9l8-8 8 8" fill="none" stroke="#fff" stroke-width="1.500"/></svg>
    <svg width="25" height="25" viewBox="0 0 25 25" fill="none" stroke="#fff" stroke-width="1.400"><circle cx="12" cy="12" r="11"/><ellipse cx="12" cy="12" rx="5" ry="11"/><path d="M2 8h20M2 16h20"/><circle cx="18" cy="18" r="6" fill="#3a1a12" stroke-width="1.700"/><path d="M14 22l8-8"/></svg>
    <svg width="24" height="22" viewBox="0 0 24 22" fill="none" stroke="#fff" stroke-width="1.500"><path d="M1 7h4l6-6v20l-6-6H1zM14 7q2 4 0 8M17 4q5 7 0 14"/><path d="M20 1q7 10 0 20" stroke="#8a706c"/></svg>
    <svg width="24" height="20" viewBox="0 0 24 20" fill="none" stroke="#fff" stroke-width="1.700"><path d="M10 3h9v15H8v-3M20 7.500h3v6h-3"/><path d="M1 4h7v4q0 3-3.500 3T1 8z" fill="#fff"/><path d="M2.500 4V0M6.500 4V0M4.500 11v7h3"/><path d="M11.500 6h2v9.500h-2z" fill="#fff" stroke="none"/></svg>
    <div class="clock"><span>1:26 PM</span><span>11/5/2024</span></div>
    <span class="badge">4</span>
  </div>
</div>
</body>
</html>
```
FILE: styles.css
```css
* { box-sizing: border-box; }
body { margin: 0; width: 1920px; height: 1080px; overflow: hidden; display: flex; flex-direction: column; font-family: "Open Sans", "Noto Sans", sans-serif; font-size: 17px; color: #252423; background: #f3f2f1; }
svg { display: block; flex: none; overflow: visible; }
h2, h4, h5, p, ul { margin: 0; padding: 0; }
.paints { position: absolute; width: 0; height: 0; }
.sprite { display: none; }

.k { fill: none; stroke: #3b3a39; stroke-width: 1.6; }
.kw { fill: #fff; stroke: #3b3a39; stroke-width: 1.4; }
.b { fill: #83beec; stroke: #106ebe; stroke-width: 1.4; }
.bl { fill: none; stroke: #1b80c4; stroke-width: 1.6; }
.g { fill: #c8c6c4; stroke: #8a8886; stroke-width: 1.4; }
.gf { fill: #c8c6c4; stroke: #a19f9d; stroke-width: 1; }
.gk { fill: #c8c6c4; stroke: #3b3a39; stroke-width: 1.2; }
.gl { fill: none; stroke: #8a8886; stroke-width: 1.4; }

/* title bar */
.titlebar { height: 51px; flex: none; background: #3b3a39; color: #fff; display: flex; align-items: center; }
.quick { width: 150px; display: flex; gap: 22px; padding-left: 25px; }
.doc { width: 571px; font-size: 17.1px; white-space: nowrap; padding-top: 7px; }
.tri { border: 6px solid transparent; border-top: 7px solid #fff; border-bottom: 0; margin-top: 3px; }
.topsearch { margin-left: 156px; width: 600px; height: 36px; margin-top: -1px; background: #d2d2d0; border-radius: 3px; color: #484644; display: flex; align-items: center; gap: 16px; padding-left: 26px; font-size: 19.4px; }
.topsearch span { padding-top: 3px; }
.signin { margin-left: 111px; width: 70px; margin-top: 2px; font-size: 17.6px; }
.winbtns { display: flex; gap: 50px; margin-left: 47px; margin-top: 5px; }

/* ribbon tabs */
.tabs { height: 47px; flex: none; background: #fafafa; display: flex; align-items: stretch; font-size: 20px; line-height: 49px; white-space: nowrap; }
.file { width: 99px; background: #f3f3f3; padding-left: 33px; font-weight: 600; letter-spacing: -.2px; font-size: 19.6px; }
.home { margin-left: 22px; width: 58px; font-weight: 600; font-size: 19.6px; border-bottom: 5px solid #117865; }
.t-ins { margin-left: 46px; width: 100px; letter-spacing: -.3px; }
.t-mod { width: 136px; letter-spacing: .05px; }
.t-view { width: 91px; }
.t-opt { width: 132px; letter-spacing: -.1px; }
.t-help { letter-spacing: -.1px; }
.share { margin: 6px 9px 5px auto; width: 125px; height: 36px; border: 0; border-radius: 5px; background: #117865; color: #fff; font: 600 16px "Open Sans", sans-serif; letter-spacing: -.3px; display: flex; align-items: center; justify-content: space-between; padding: 0 12px 0 10px; }
.share svg:first-child { margin-top: -2px; }
.share span { margin-left: 4px; padding-top: 1px; }

/* ribbon */
.ribbon { height: 142px; flex: none; background: #fafafa; display: flex; box-shadow: 0 2px 6px rgba(0,0,0,.22); position: relative; z-index: 5; color: #3b3a39; }
.group { position: relative; display: flex; flex-direction: column; }
.group::after { content: ""; position: absolute; right: 0; top: 7px; bottom: 3px; width: 1px; background: #d2d0ce; }
.g-clip { width: 121px; } .g-data { width: 461px; } .g-query { width: 173px; } .g-insert { width: 612px; }
.g-calc { width: 278px; } .g-sens { width: 110px; } .g-share { width: 87px; } .g-cop { width: 78px; }
.g-cop::after { display: none; }
.cmds { display: flex; height: 121px; }
.glabel { text-align: center; font-size: 14px; line-height: 21px; letter-spacing: -.2px; }
.g-clip .glabel { margin-left: -2px; }
.big { display: flex; flex-direction: column; align-items: center; padding-top: 16px; line-height: 24px; flex: none; white-space: nowrap; letter-spacing: -.2px; }
.big > svg { margin-bottom: 3px; }
.big > svg.up { margin-top: -3px; }
.big span { display: flex; align-items: center; gap: 3px; height: 24px; }
.dim { color: #c1bfbd; }
.paste { width: 84px; padding-left: 0; } .paste > svg { margin-left: 8px; }
.minis { display: flex; flex-direction: column; align-items: center; padding: 13px 0 0 0; margin-left: -7px; width: 26px; gap: 11px; }
.getdata { width: 82px; } .getdata > svg { margin-left: 10px; }
.list { display: flex; flex-direction: column; line-height: 36px; padding-top: 8px; white-space: nowrap; letter-spacing: 0; margin-left: -1px; }
.list > div { display: flex; align-items: center; height: 36px; }
.list > div > svg:first-child { margin: -1px 3px 0 0; }
.list .cv { margin-left: 8px; margin-top: 3px; }
.l1 { width: 199px; } .l1 svg:first-child { width: 23px; } .l2 > div > svg:first-child { width: 25px; margin-right: 4px; }
.b-tr { width: 108px; letter-spacing: -.6px; } .b-rf { width: 42px; overflow: visible; letter-spacing: -.5px; } .b-rf > svg { margin-left: 6px; }
.b-nv { width: 78px; padding-left: 7px; }
.b-nv span { margin-left: -4px; }
.gallery { margin-top: 17px; width: 380px; height: 93px; border: 1px solid #8a8886; background: #fff; display: flex; }
.cells { width: 355px; display: grid; grid-template-columns: repeat(9, 39px); grid-template-rows: 44px 44px; place-items: center; padding: 1px 0 0 1px; }
.cells svg { width: 24px; height: 24px; }
.more { flex: 1; border-left: 1px solid #8a8886; display: grid; place-items: center; background: #fafafa; padding-right: 2px; }
.b-tb { width: 72px; } .b-mv { width: 60px; } .b-mv > svg { margin-left: 5px; }
.b-nvc { width: 130px; } .b-nvc > svg { margin-left: 4px; }
.b-nm { width: 52px; } .b-qm { width: 94px; } .b-qm > svg { margin-right: 6px; }
.b-nm, .b-qm { letter-spacing: -.5px; }
.b-se { width: 108px; } .b-se > svg { margin-left: 6px; } .b-pu { width: 86px; } .b-pu > svg { margin-left: 6px; }
.copwrap { width: 49px; padding: 17px 0 0 20px; height: 142px; }
.copwrap span { display: block; margin: 5px 0 0 -5px; line-height: 24px; }
.copwrap em { display: block; font-style: normal; font-size: 14px; line-height: 21px; margin-top: 33px; letter-spacing: -.2px; }
.collapse { position: absolute; right: 8px; bottom: 7px; }

/* workspace */
.main { height: 732px; flex: none; display: flex; }
.rail { width: 61px; border-right: 1px solid #e1dfdd; }
.rail div { height: 60px; display: flex; align-items: center; justify-content: center; border-left: 4px solid transparent; padding-right: 3px; }
.rail .on { border-color: #117865; }
.rail div:nth-child(2) { height: 57px; }
.rail div:nth-child(3) { padding-top: 3px; }
.rail div:nth-child(4) { padding-top: 2px; height: 64px; padding-right: 4px; }
.center { width: 1268px; display: flex; flex-direction: column; }
.stage { height: 679px; display: flex; }
.canvas { position: relative; width: 1219px; background: #000; overflow: hidden; }
.dots { position: absolute; }
.dl, .dr { top: 2px; height: 668px; width: 3px; background: repeating-linear-gradient(#6e6e6e 0 3px, transparent 3px 6px); }
.dl { left: 14px; } .dr { left: 1202px; }
.db { left: 14px; width: 1191px; top: 667px; height: 3px; background: repeating-linear-gradient(90deg, #6e6e6e 0 3px, transparent 3px 6px); }

/* report visuals placed on the free canvas */
.vis { position: absolute; background: #28080a; border-radius: 21px; box-shadow: 0 0 0 4px #000; padding-top: 9px; color: #fddab0; display: flex; flex-direction: column; align-items: center; }
.vis h4 { align-self: flex-start; padding-left: 13px; font: bold 13px/18px "DejaVu Sans Mono", monospace; letter-spacing: .34px; white-space: nowrap; }
.vis b { font: 28px/40px "DejaVu Sans Mono", monospace; letter-spacing: .79px; white-space: nowrap; }
.serif h4 { align-self: center; padding: 0 0 0 9px; text-align: center; font: bold 14.4px/18px "Liberation Serif", serif; letter-spacing: 0; }
.light h4 { font-weight: 400; font-size: 14.6px; }
.c-head { left: 23px; top: 6px; width: 952px; height: 59px; flex-direction: row; align-items: flex-start; padding: 13px 0 0 49px; font-size: 20px; line-height: 30px; white-space: nowrap; letter-spacing: -.48px; }
.c-head span:first-child { width: 459px; }
.c-head .h2 { letter-spacing: -.64px; }
.c-head small { font-size: 17px; width: 91px; line-height: 39px; letter-spacing: -.45px; }
.c-act { left: 21px; top: 76px; width: 249px; height: 126px; } .c-act b { margin-top: 28px; }
.c-avg { left: 280px; top: 76px; width: 248px; height: 122px; } .c-avg b { margin-top: 26px; }
.c-churn { left: 528px; top: 76px; width: 230px; height: 126px; } .c-churn b { margin-top: 28px; }
.c-ret { left: 769px; top: 76px; width: 206px; height: 126px; } .c-ret b { margin-top: 19px; margin-right: 6px; letter-spacing: 0; }
.c-ret h4 { padding: 0 0 0 3px; }
.c-le { left: 21px; top: 207px; width: 499px; height: 81px; } .c-le b { margin-top: 6px; }
.c-ee { left: 525px; top: 210px; width: 441px; height: 78px; } .c-ee b { margin-top: 4px; height: 34px; overflow: hidden; }
.c-ls { left: 21px; top: 297px; width: 499px; height: 111px; } .c-ls b { margin-top: 20px; }
.c-es { left: 524px; top: 297px; width: 454px; height: 111px; } .c-es b { margin-top: 20px; }
.c-tot { left: 21px; top: 417px; width: 499px; height: 102px; } .c-tot b { margin-top: 16px; }
.c-mrr { left: 528px; top: 417px; width: 439px; height: 105px; } .c-mrr b { margin-top: 18px; }
.c-clv { left: 974px; top: 444px; width: 224px; height: 79px; } .c-clv b { margin-top: 4px; }
.c-new { left: 503px; top: 531px; width: 224px; height: 132px; } .c-new b { margin-top: 31px; }
.c-kpi { left: 732px; top: 528px; width: 224px; height: 132px; } .c-kpi svg { margin-top: 2px; }
.c-rc { left: 965px; top: 531px; width: 233px; height: 132px; } .c-rc b { margin-top: 31px; }
.slicer { background: #380207; padding-top: 13px; color: #605e5c; align-items: stretch; }
.slicer h5 { margin: 0 20px; height: 14px; background: #6a2226; color: #fdd0b8; font: 9.6px/12px "DejaVu Sans Mono", monospace; letter-spacing: .3px; padding: 0 0 1px 1px; white-space: nowrap; display: flex; align-items: center; justify-content: space-between; }
.slicer ul { list-style: none; flex: 1; display: flex; flex-direction: column; gap: 3px; margin: 3px auto 15px; }
.slicer li { flex: 1; background: #fff; border: 1px solid #8c8080; display: grid; place-items: center; font-size: 10.4px; letter-spacing: -.1px; }
.s-region { left: 965px; top: 36px; width: 120px; height: 394px; }
.s-region h5 { margin-right: 22px; width: 75px; color: #fdd0b8; } .s-region h5 svg { color: #8c5a5c; }
.s-region ul { width: 54px; margin-left: 32px; }
.s-sub { left: 1064px; top: 36px; width: 134px; height: 394px; }
.s-sub ul { width: 73px; margin-left: 32px; }

.filters { width: 49px; background: #fff; border-left: 1px solid #b3b0ad; display: flex; flex-direction: column; align-items: center; padding-top: 19px; }
.flip { transform: scaleX(-1); }
.fun { margin: 23px 0 10px 4px; }
.filters span { writing-mode: vertical-rl; font-weight: 600; font-size: 20.5px; line-height: 20px; letter-spacing: .45px; margin-right: 0; }

.pagebar { height: 53px; background: #f3f2f1; border-bottom: 1px solid #e1dfdd; display: flex; }
.dev { width: 66px; margin-left: 15px; height: 53px; display: flex; flex-direction: column; padding: 11px 0 0 3px; }
.dev i { width: 36px; height: 4px; margin: 10px 0 0 -3px; border-radius: 2px; background: #117865; }
.mob { margin: 7px 0 0 9px; }
.al, .ar { border: 6px solid transparent; margin-top: 20px; height: 12px; }
.al { border-right: 7px solid #c8c6c4; border-left: 0; margin-left: 30px; }
.ar { border-left: 7px solid #c8c6c4; border-right: 0; margin-left: 27px; }
.pages { width: 914px; margin-left: 10px; display: flex; line-height: 56px; font-size: 16.2px; letter-spacing: -.2px; }
.pages span { flex: 1; background: #fff; text-align: center; border-left: 1px solid #c8c6c4; padding-right: 2px; height: 52px; }
.pages .cur { font-weight: 600; border-bottom: 6px solid #117865; letter-spacing: -.5px; padding-right: 0; }
.add { width: 58px; background: #117865; display: grid; place-items: center; }

/* side panes */
.pane { width: 271px; border-left: 1px solid #e1dfdd; padding: 0 0 0 12px; }
.build { width: 272px; }
.pane header { display: flex; align-items: center; height: 58px; padding-right: 12px; }
.pane h2 { font-size: 21.6px; font-weight: 600; flex: 1; letter-spacing: -.1px; padding-top: 1px; }
.build h2 { letter-spacing: -.2px; }
.el { margin-right: 11px; }
.psearch { width: 246px; height: 38px; margin-top: 4px; border: 1px solid #605e5c; border-radius: 3px; display: flex; align-items: center; gap: 10px; padding-left: 11px; font-size: 19px; color: #605e5c; }
.psearch span { padding-top: 3px; }
.scroll { margin: 19px 0 0 -12px; height: 601px; display: flex; position: relative; }
.rows { width: 271px; }
.row { height: 61px; border-bottom: 1px solid #e1dfdd; display: flex; align-items: center; gap: 5px; padding-left: 12px; font-weight: 600; font-size: 17px; letter-spacing: -.05px; }
.last { border: 0; }
.rt { transform: rotate(-90deg); }
.well { background: #e1dfdd; height: 357px; padding: 11px 0 0 12px; }
.wcard { width: 246px; height: 346px; background: #f3f2f1; border-radius: 6px 6px 0 0; box-shadow: 0 0 3px rgba(0,0,0,.15); padding: 14px 12px 0; color: #3b3a39; }
.wcard label { display: block; line-height: 22px; letter-spacing: -.2px; }
.swatch { margin-top: 6px; width: 78px; height: 36px; border: 1px solid #605e5c; border-radius: 2px; background: #fff; display: flex; align-items: center; justify-content: space-between; padding: 0 6px; }
.swatch i { width: 24px; height: 24px; background: #000; border: 1px solid #8a8886; }
.m1 { margin-top: 14px; } .m2 { margin-top: 14px; } .m3 { margin-top: 20px; }
.wcard .m3 { letter-spacing: -.4px; }
.inp { margin-top: 6px; width: 222px; height: 38px; border: 1px solid #8a8886; border-radius: 2px; background: #fff; display: flex; align-items: center; justify-content: space-between; padding: 1px 6px 0 6px; font-size: 16px; }
.off { height: 36px; background: none; border-color: #c8c6c4; color: #a19f9d; padding: 0 9px 0 12px; font-size: 17px; }
.off svg { color: #605e5c; }
.slide { display: flex; align-items: center; margin-top: 15px; }
.num { width: 81px; height: 36px; border: 1px solid #8a8886; border-radius: 2px; background: #fff; display: flex; align-items: center; justify-content: space-between; padding: 0 3px 0 6px; color: #605e5c; }
.knob { width: 21px; height: 21px; margin: 4px 0 0 8px; border: 2px solid #605e5c; border-radius: 50%; background: #fff; }
.track { width: 103px; height: 6px; margin-top: 4px; background: #c8c6c4; }
.bar { position: absolute; right: 0; top: 0; width: 9px; height: 458px; border-radius: 5px; background: #c8c6c4; }
.sug { line-height: 20px; letter-spacing: -.1px; margin-top: 1px; }
.vgrid { margin-top: 7px; width: 246px; height: 281px; border: 1px solid #8a8886; border-radius: 2px; background: #fff; display: grid; grid-template-columns: repeat(6, 39.1px); grid-auto-rows: 39px; place-items: center; padding: 3px 0 0 5px; }
.vgrid svg { width: 27px; height: 28px; }
.dlab { margin-top: 14px; line-height: 22px; }
.drop { margin-top: 6px; width: 246px; height: 58px; border: 1px dashed #605e5c; background: #fff; padding: 6px; }
.drop div { height: 44px; border: 1px solid #605e5c; border-radius: 2px; text-align: center; font-weight: 600; font-size: 17px; line-height: 43px; letter-spacing: .15px; }
.rrail { width: 48px; background: #faf9f8; border-left: 1px solid #e1dfdd; display: flex; flex-direction: column; align-items: center; }
.r0 { height: 48px; padding-top: 10px; }
.r1 { width: 48px; height: 48px; background: #e1dfdd; border: 1.5px solid #605e5c; display: grid; place-items: center; }
.r2 { border-top: 0; }
.r3 { margin: 10px 3px 0 0; }
.r4 { width: 48px; height: 48px; margin-top: auto; border-top: 1px solid #e1dfdd; border-bottom: 1px solid #e1dfdd; display: grid; place-items: center; padding-top: 1px; }

.status { height: 36px; flex: none; border-bottom: 1px solid #000; display: flex; justify-content: space-between; align-items: center; padding: 1px 27px 0 6px; font-size: 17.2px; color: #484644; }
.status > span { padding-top: 2px; }
.zoom { display: flex; align-items: center; width: 291px; justify-content: space-between; color: #605e5c; }
.zoom span { letter-spacing: -.3px; margin-right: 9px; }

/* taskbar */
.taskbar { height: 72px; flex: none; display: flex; align-items: center; background: linear-gradient(90deg, #271b26 0, #2a1b29 380px, #351b1e 490px, #3c1e12 560px, #302413 650px, #2b2414 780px, #2e2413 1120px, #3a1d13 1300px, #3b1b13 1700px, #331a19 1920px); color: #fff; }
.wid { margin: 2px 351px 0 24px; }
.start { margin: 2px 21px 0 0; }
.tsearch { width: 328px; height: 48px; margin-top: 2px; border-radius: 24px; background: rgba(255,255,255,.13); border: 1px solid rgba(255,255,255,.05); display: flex; align-items: center; gap: 15px; padding-left: 16px; font-size: 19.2px; color: #d8d2d2; }
.apps { margin-left: 4px; display: flex; }
.apps div { width: 66px; height: 60px; margin-top: 2px; display: flex; flex-direction: column; align-items: center; padding-top: 11px; }
.apps .c-pub, .apps .c-xls, .apps .c-ppt, .apps .c-doc { padding-right: 2px; }
.run::after { content: ""; width: 8px; height: 5px; border-radius: 3px; background: #9b9190; margin-top: 6px; }
.apps .act { width: 60px; margin-left: 3px; background: rgba(255,255,255,.07); border: 1px solid rgba(255,255,255,.06); border-radius: 6px; }
.act::after { content: ""; width: 24px; height: 5px; border-radius: 3px; background: #dba1e3; margin-top: 6px; }
.c-pub { color: #2b8a8c; } .c-xls { color: #4f9a40; } .c-ppt { color: #e0562c; } .c-doc { color: #2f5fb8; }
.tray { margin-left: 98px; display: flex; align-items: center; }
.tray > svg:nth-child(2) { margin-left: 21px; }
.tray > svg:nth-child(3) { margin-left: 11px; }
.tray > svg:nth-child(4) { margin-left: 12px; }
.clock { width: 101px; display: flex; flex-direction: column; text-align: right; font-size: 17.4px; line-height: 23px; letter-spacing: -.4px; }
.badge { width: 24px; height: 24px; margin-left: 10px; border-radius: 50%; background: #d89fe6; color: #2b1a2c; font-size: 15px; line-height: 24px; text-align: center; }
```
